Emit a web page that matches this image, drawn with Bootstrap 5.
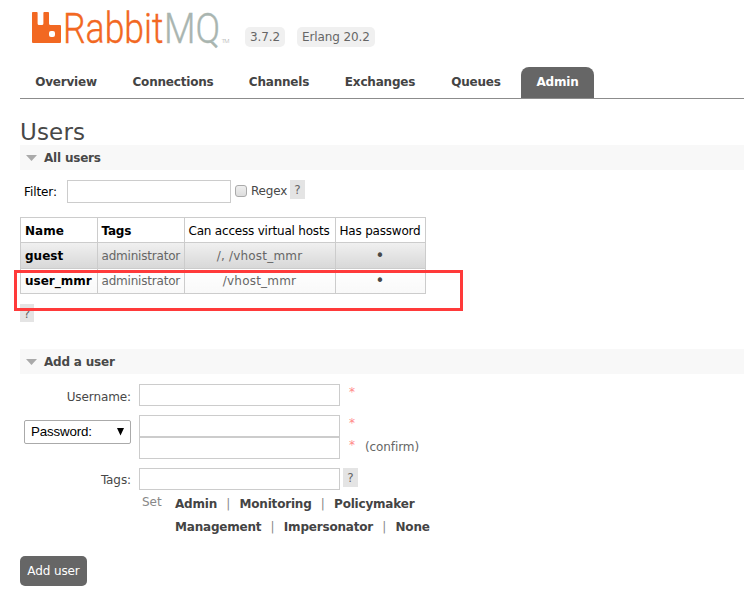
<!DOCTYPE html>
<html lang="en">
<head>
<meta charset="utf-8">
<title>RabbitMQ Management</title>
<link href="https://cdn.jsdelivr.net/npm/bootstrap@5.3.0/dist/css/bootstrap.min.css" rel="stylesheet">
<style>
body{font:12px/16px "DejaVu Sans",sans-serif;color:#484848;background:#fff;overflow:hidden}
.page{padding-left:20px;height:593px}
.top{height:67px;padding-left:12px}
.logo{width:200px;height:58px}
.ver{margin-top:27px;height:20px;background:#f0f0f0;border-radius:5px;line-height:21px;padding:0 5px;color:#666;letter-spacing:-.1px;white-space:nowrap}
.ver-a{margin-left:13px;width:40px}
.ver-b{margin-left:12px;width:78px}
.tabs{height:32px;border-bottom:1px solid #8c8c8c;flex-wrap:nowrap}
.tabs .nav-link{height:31px;padding:7px 0 0;margin:0;border:0;border-radius:8px 8px 0 0;font-weight:bold;color:#444;text-align:center;white-space:nowrap;letter-spacing:-.2px}
.tabs .nav-link.active{background:#666;color:#fff}
.t1{width:92px}.t2{width:122px}.t3{width:90px}.t4{width:112px}.t5{width:80px}
.tabs .t6{width:73px;margin-left:5px}
h1{font-size:23px;line-height:28px;margin:19px 0 0;height:27px;font-weight:normal;color:#484848;letter-spacing:.15px}
h2{height:25px;line-height:25px;margin:0;background:#f8f8f8;font-size:12px;font-weight:bold;color:#484848;padding:1px 0 0 6px;letter-spacing:-.2px}
.tri{width:11px;height:6px;margin:-1px 7px 0 0}
.second{margin-top:27px}
.filter{padding:10px 0 0 4px;height:47px}
.fil{width:34px;letter-spacing:-.1px}
.box{height:22px;border:1px solid #ccc;border-radius:0;padding:0 3px;font-size:12px;width:201px;box-shadow:none}
.filter .box{width:164px;height:23px;margin-left:9px}
.chk{width:12px;height:12px;margin:5px 4px 0;border:1px solid #aaa;border-radius:3px;background:linear-gradient(#eee,#ddd);flex:none}
.regex{margin-top:3px;width:39px;letter-spacing:-.2px}
.help{width:15px;height:19px;background:#e4e4e4;color:#666;font-size:12px;line-height:21px;text-align:center;flex:none}
.users{width:406px;table-layout:fixed;border-collapse:collapse;margin:0;color:#000}
.users th,.users td{border:1px solid #ccc;padding:1px 0 0 4px;height:25.4px;line-height:16px;white-space:nowrap;letter-spacing:-.2px}
.users th+th{padding-left:3.500px}
.users td{color:#666}
.users tr>:first-child{color:#000;font-weight:bold;letter-spacing:0}
.users tr>:nth-child(2){letter-spacing:-.2px;padding-left:3.500px}
.users .odd{background:linear-gradient(#f0f0f0,#d8d8d8)}
.users .even{background:linear-gradient(#fff,#f9f9f9)}
.users td.text-center{padding:1px 1px 0 0;letter-spacing:.2px}
.users td.dot{font-size:15px;color:#484848}
.cn{width:77px}.ct{width:87px}.cv{width:151px}.cp{width:90px}
.hint{height:18px;width:14px;margin-top:10px}
.mark-box{position:absolute;left:14px;top:270px;width:449px;height:41px;border:3px solid #ff3a3a}
.lab{width:111px;text-align:right;margin-right:8px;flex:none;letter-spacing:-.1px}
.pick{width:107px;height:24px;margin:5px 8px 0 4px;padding:0 6px;border:1px solid #aaa;border-radius:2px;background:#fff;font:13.33px/22px "Liberation Sans",sans-serif;color:#000;letter-spacing:-.15px;flex:none}
.req{color:#f88;margin-left:9px;width:7px}
.frow{margin-top:10px;height:31px}.frow .lab{padding-top:5px}
.frow2{height:53px}
.frow3{height:24px}.frow3 .lab{padding-top:4px}
.conf{margin:2px 0 0 9px;color:#666;letter-spacing:-.1px}
.tagh{margin-left:3px}
.tags{padding-left:122px;height:64px}
.tags b{color:#444;letter-spacing:-.2px}
.set{width:33px;color:#888;padding-top:2px}
.line{height:23px;padding-top:4px}
.line i{font-style:normal;width:22.500px;text-align:center;color:#888}
.go{width:67px;height:30px;background:#666;color:#fff;border:0;border-radius:5px;font-size:12px;padding:0;line-height:31px;letter-spacing:-.1px}
</style>
<script src="https://cdn.jsdelivr.net/npm/bootstrap@5.3.0/dist/js/bootstrap.bundle.min.js"></script>
</head>
<body>
<div class="page position-relative">
<header class="top d-flex align-items-start">
<svg class="logo" viewBox="0 -9 200 58">
<path fill="#f26822" d="M.8 3H4.900Q5.600 3 5.600 4V14.500Q5.600 16 7 16H10Q11.400 16 11.400 14.500V4Q11.400 3 12.200 3H16.200Q17 3 17 4V14.500Q17 16 18.500 16H28Q29 16 29 17V33Q29 34 28 34H1Q0 34 0 33V4Q0 3 .8 3ZM19 22Q17 22 17 24V26Q17 28 19 28H21Q23 28 23 26V24Q23 22 21 22Z"/>
<g font-family="Roboto,sans-serif" font-weight="300" font-size="43" stroke-width=".4">
<text x="31" y="33.500" fill="#f26822" stroke="#f26822" textLength="100.500" lengthAdjust="spacingAndGlyphs">Rabbit</text>
<text x="132" y="33.500" fill="#a9b5b0" stroke="#a9b5b0" textLength="56" lengthAdjust="spacingAndGlyphs">MQ</text>
</g>
<text x="189.500" y="33.500" font-family="Roboto,sans-serif" font-weight="300" font-size="6" fill="#aaa" textLength="8">TM</text>
</svg>
<span class="ver ver-a">3.7.2</span>
<span class="ver ver-b">Erlang 20.2</span>
</header>
<nav class="nav nav-tabs tabs">
<a class="nav-link t1">Overview</a><a class="nav-link t2">Connections</a><a class="nav-link t3">Channels</a><a class="nav-link t4">Exchanges</a><a class="nav-link t5">Queues</a><a class="nav-link t6 active">Admin</a>
</nav>
<h1>Users</h1>
<h2 class="d-flex align-items-center"><svg class="tri" viewBox="0 0 11 6"><path d="M0 0H11L5.500 6Z" fill="#aaa"/></svg>All users</h2>
<div class="filter d-flex align-items-start">
<span class="mt-1 text-black fil">Filter:</span><input class="form-control box" aria-label="Filter"><span class="chk"></span><span class="regex">Regex</span><span class="help">?</span>
</div>
<table class="users">
<colgroup><col class="cn"><col class="ct"><col class="cv"><col class="cp"></colgroup>
<tr><th>Name</th><th>Tags</th><th class="fw-normal">Can access virtual hosts</th><th class="fw-normal">Has password</th></tr>
<tr class="odd"><td>guest</td><td>administrator</td><td class="text-center">/, /vhost_mmr</td><td class="text-center dot">•</td></tr>
<tr class="even"><td>user_mmr</td><td>administrator</td><td class="text-center">/vhost_mmr</td><td class="text-center dot">•</td></tr>
</table>
<div class="help hint">?</div>
<h2 class="d-flex align-items-center second"><svg class="tri" viewBox="0 0 11 6"><path d="M0 0H11L5.500 6Z" fill="#aaa"/></svg>Add a user</h2>
<form>
<div class="d-flex frow"><span class="lab">Username:</span><input class="form-control box" aria-label="Username"><span class="req">*</span></div>
<div class="d-flex frow2"><div class="pick d-flex justify-content-between align-items-center"><span>Password:</span><svg width="7" height="8" viewBox="0 0 7 8"><path d="M0 0H7L3.500 7.500Z"/></svg></div>
<div><div class="d-flex"><input class="form-control box" aria-label="Password"><span class="req">*</span></div><div class="d-flex"><input class="form-control box" aria-label="Confirm password"><span class="req">*</span><span class="conf">(confirm)</span></div></div></div>
<div class="d-flex frow3"><span class="lab">Tags:</span><input class="form-control box" aria-label="Tags"><span class="help tagh">?</span></div>
<div class="d-flex tags"><span class="set">Set</span><div><div class="d-flex line"><b>Admin</b><i>|</i><b>Monitoring</b><i>|</i><b>Policymaker</b></div><div class="d-flex line"><b>Management</b><i>|</i><b>Impersonator</b><i>|</i><b>None</b></div></div></div>
<button type="button" class="btn go">Add user</button>
</form>
<div class="mark-box"></div>
</div>
</body>
</html>
